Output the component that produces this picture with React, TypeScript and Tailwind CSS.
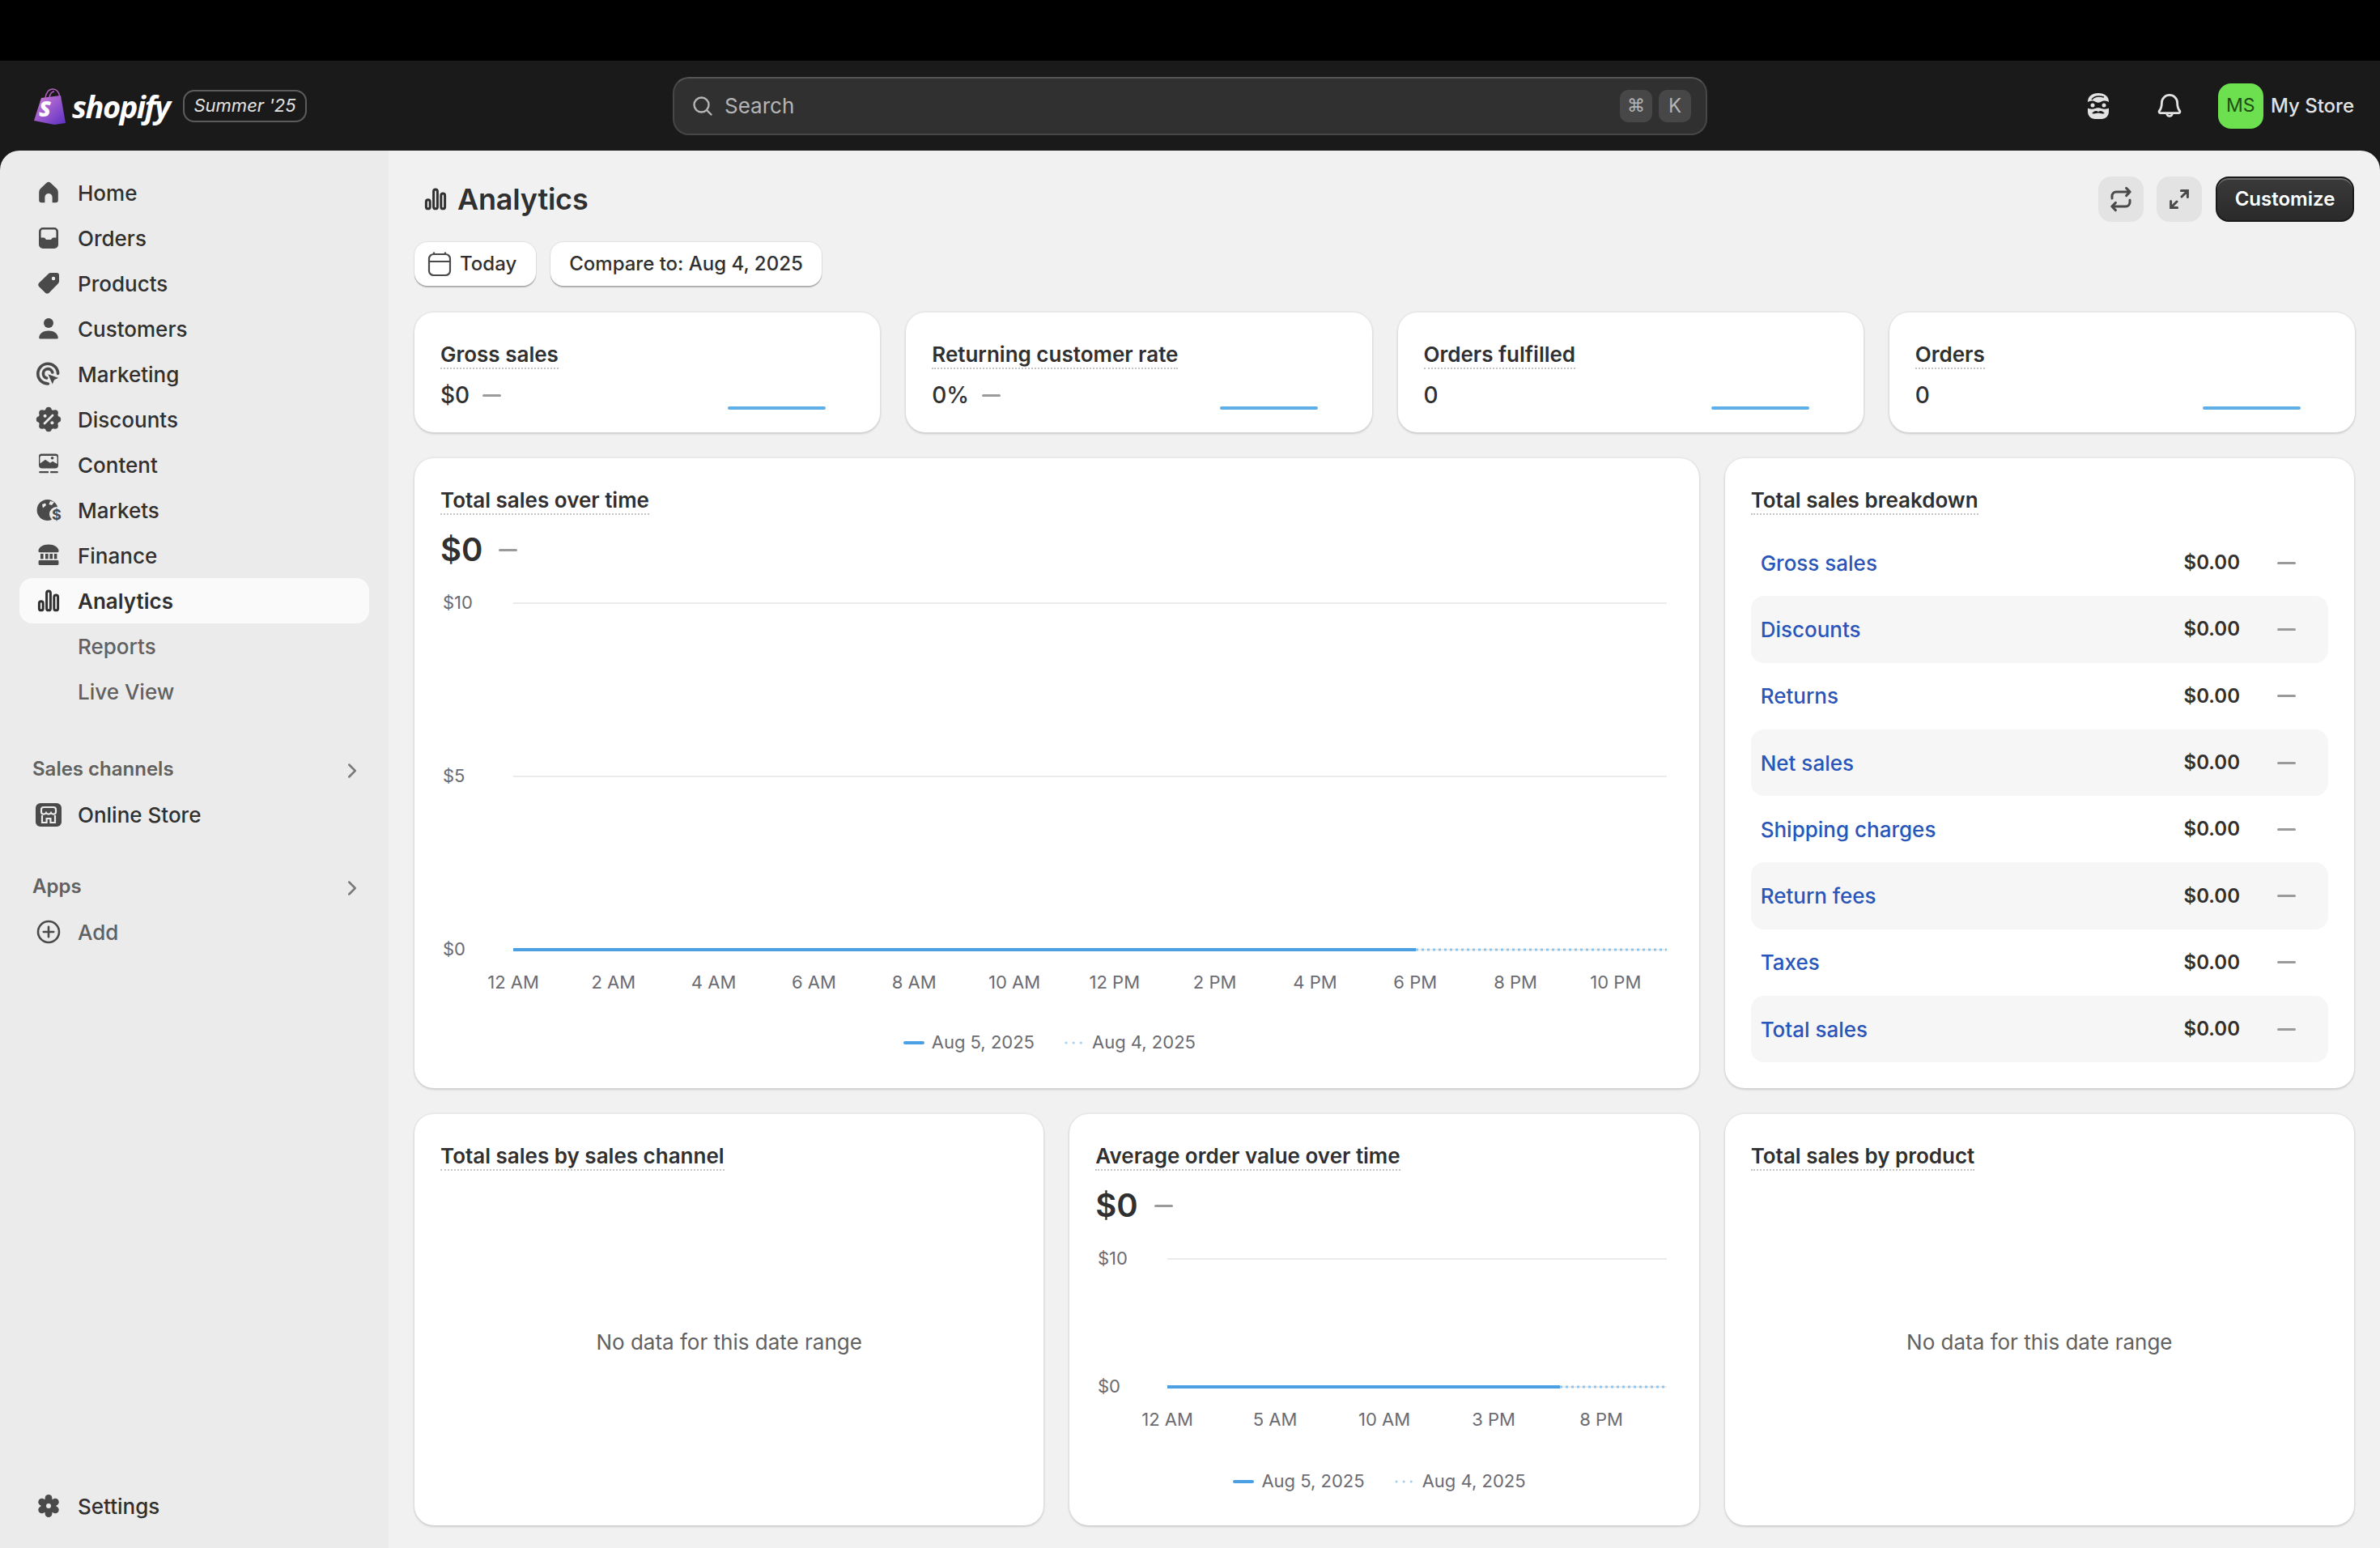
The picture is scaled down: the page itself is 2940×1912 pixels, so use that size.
const sans = 'font-["Inter",sans-serif]';
const inkIcon = '#4a4a4a';

// ── Nav icons (drawn on a 20 unit box, shown at 40px) ──
function Icon({ children, className = '' }: { children: React.ReactNode; className?: string }) {
  return (
    <svg viewBox="0 0 20 20" className={`w-10 h-10 shrink-0 ${className}`} fill={inkIcon}>
      {children}
    </svg>
  );
}

const HomeIcon = () => (
  <Icon>
    <path d="M8.800 3.900a1.800 1.800 0 0 1 2.400 0l3.700 3.500a3 3 0 0 1 1 2.200v5a1.500 1.500 0 0 1-1.500 1.500h-2.100v-3.300a2.300 2.300 0 0 0-4.600 0v3.300H5.600A1.500 1.500 0 0 1 4.100 14.600V9.600a3 3 0 0 1 1-2.200Z" />
  </Icon>
);
const OrdersIcon = () => (
  <Icon>
    <path fillRule="evenodd" d="M6.500 3.500h7A2.500 2.500 0 0 1 16 6v8a2.500 2.500 0 0 1-2.500 2.500h-7A2.500 2.500 0 0 1 4 14V6a2.500 2.500 0 0 1 2.500-2.500ZM6.500 4.800A1.200 1.200 0 0 0 5.300 6v3.700H7a1 1 0 0 1 .8.400l.7.900h3l.7-.900a1 1 0 0 1 .8-.400h1.700V6a1.200 1.200 0 0 0-1.200-1.200Z" />
  </Icon>
);
const ProductsIcon = () => (
  <Icon>
    <path fillRule="evenodd" d="M11.300 3.500H15a1.500 1.500 0 0 1 1.500 1.500v3.700a2 2 0 0 1-.6 1.400l-5.500 5.600a1.800 1.800 0 0 1-2.500 0L4.200 12.100a1.800 1.800 0 0 1 0-2.500l5.700-5.500a2 2 0 0 1 1.400-.6ZM13 5.900a1.100 1.100 0 1 0 0 2.200 1.100 1.100 0 0 0 0-2.200Z" />
  </Icon>
);
const CustomersIcon = () => (
  <Icon>
    <circle cx="10" cy="6.500" r="3" />
    <path d="M4.100 15.500c.2-2.600 2.700-4.300 5.900-4.300s5.700 1.700 5.900 4.300a.8.800 0 0 1-.8.800H4.900a.8.800 0 0 1-.8-.8Z" />
  </Icon>
);
const MarketingIcon = () => (
  <Icon>
    <g fill="none" stroke={inkIcon} strokeWidth="1.800" strokeLinecap="round">
      <path d="M9.700 16A6.200 6.200 0 1 1 15.800 9.700" />
      <path d="M8.800 12.500a2.900 2.900 0 1 1 3.600-3.500" />
    </g>
    <path d="M9.300 9.700l7.400 2.700-3 1.300-1.300 3.100Z" stroke="#ebebeb" strokeWidth=".5" />
  </Icon>
);
function DiscountsIcon() {
  const lobes = [0, 45, 90, 135, 180, 225, 270, 315];
  return (
    <Icon>
      <circle cx="10" cy="10" r="6.300" />
      {lobes.map((a) => (
        <circle key={a} cx={10 + 5.700 * Math.cos((a * Math.PI) / 180)} cy={10 + 5.700 * Math.sin((a * Math.PI) / 180)} r="1.900" />
      ))}
      <path d="M12.500 7.500 7.500 12.500" stroke="#ebebeb" strokeWidth="1.400" strokeLinecap="round" />
      <circle cx="7.800" cy="7.900" r="1" fill="#ebebeb" />
      <circle cx="12.200" cy="12.100" r="1" fill="#ebebeb" />
    </Icon>
  );
}
const ContentIcon = () => (
  <Icon>
    <path d="M5.600 3.200h8.800A1.600 1.600 0 0 1 16 4.800v5.400a2 2 0 0 1-2 2H6a2 2 0 0 1-2-2V4.800a1.600 1.600 0 0 1 1.600-1.600Z" />
    <path d="M4.700 9.300 8 6.900l3 2 1.500-1 2.800 1.600v-4a1 1 0 0 0-1-1H5.700a1 1 0 0 0-1 1Z" fill="#ebebeb" />
    <circle cx="12.300" cy="5.900" r=".9" />
    <rect x="4.100" y="14" width="6" height="1.100" rx=".5" />
    <rect x="11" y="14" width="4.900" height="1.100" rx=".5" />
  </Icon>
);
const MarketsIcon = () => (
  <Icon>
    <circle cx="9.300" cy="10" r="6.500" />
    <path d="M6 6.500 8 5.800 8.500 7 6.500 8.800Z" fill="#ebebeb" />
    <path d="M11 4.500 13.500 5 12 7 10.200 6.500Z" fill="#ebebeb" />
    <circle cx="15" cy="12.500" r="4.500" fill="#ebebeb" />
    <text x="15" y="15.800" textAnchor="middle" fontSize="9" fontWeight="700" fontFamily="Inter, sans-serif">$</text>
  </Icon>
);
const FinanceIcon = () => (
  <Icon>
    <path d="M10 3.300c3.500 0 6 1.700 6.300 3.800a.9.900 0 0 1-.9 1H4.600a.9.900 0 0 1-.9-1C4 5 6.500 3.300 10 3.300Z" />
    <rect x="5" y="9" width="1.800" height="3.200" />
    <rect x="8" y="9" width="1.800" height="3.200" />
    <rect x="10.700" y="9" width="1.800" height="3.200" />
    <rect x="13.400" y="9" width="1.800" height="3.200" />
    <rect x="3.800" y="13" width="12.400" height="3" rx=".7" />
  </Icon>
);
function AnalyticsIcon({ className = 'w-10 h-10' }: { className?: string }) {
  return (
    <svg viewBox="0 0 20 20" className={`shrink-0 ${className}`} fill="none" stroke="#303030" strokeWidth="1.500">
      <rect x="4.200" y="10.400" width="2.400" height="5.500" rx="1.200" />
      <rect x="8.800" y="4" width="2.400" height="11.900" rx="1.200" />
      <rect x="13.400" y="6.500" width="2.400" height="9.400" rx="1.200" />
    </svg>
  );
}
const StoreIcon = () => (
  <Icon>
    <rect x="2" y="3" width="16" height="14.500" rx="3" />
    <path d="M5.500 8.500V7a1.500 1.500 0 0 1 1.500-1.500h6A1.500 1.500 0 0 1 14.500 7v1.500c0 .8-.7 1.300-1.500 1.300-.6 0-1.200-.3-1.500-.8-.3.500-.9.800-1.500.800s-1.200-.3-1.500-.8c-.3.500-.9.800-1.500.800-.8 0-1.500-.5-1.500-1.300Z" fill="none" stroke="#ebebeb" strokeWidth="1.100" />
    <path d="M6 10.500v4.500h2.800v-2.500h2.400V15H14v-4.500" fill="none" stroke="#ebebeb" strokeWidth="1.100" />
  </Icon>
);
const AddIcon = () => (
  <Icon>
    <circle cx="10" cy="10" r="6.500" fill="none" stroke={inkIcon} strokeWidth="1.300" />
    <path d="M10 6.900v6.200M6.900 10h6.200" stroke={inkIcon} strokeWidth="1.300" strokeLinecap="round" />
  </Icon>
);
function SettingsIcon() {
  const lobes = [30, 90, 150, 210, 270, 330];
  return (
    <Icon>
      <circle cx="10" cy="10" r="4.800" />
      {lobes.map((a) => (
        <circle key={a} cx={10 + 4.800 * Math.cos((a * Math.PI) / 180)} cy={10 + 4.800 * Math.sin((a * Math.PI) / 180)} r="2.200" />
      ))}
      <circle cx="10" cy="10" r="1.500" fill="#ebebeb" />
    </Icon>
  );
}

function Chevron() {
  return (
    <svg viewBox="0 0 20 20" className="w-[30px] h-[30px] mt-[3px]" fill="none" stroke="#7a7a7a" strokeWidth="1.700" strokeLinecap="round" strokeLinejoin="round">
      <path d="m7.500 5 5 5-5 5" />
    </svg>
  );
}

function NavItem({ icon, label, active, muted }: { icon?: React.ReactNode; label: string; active?: boolean; muted?: boolean }) {
  return (
    <div className={`h-14 mx-6 pl-4 rounded-[16px] flex items-center gap-4 text-[26px] ${active ? 'bg-[#fafafa] font-semibold text-[#303030]' : muted ? 'font-medium text-[#616161]' : 'font-medium text-[#303030]'}`}>
      <span className="w-10 h-10 shrink-0 flex items-center justify-center">{icon}</span>
      {label}
    </div>
  );
}

function Sidebar() {
  return (
    <aside className="w-[480px] shrink-0 bg-[#ebebeb] pt-6 pb-6 flex flex-col">
      <NavItem icon={<HomeIcon />} label="Home" />
      <NavItem icon={<OrdersIcon />} label="Orders" />
      <NavItem icon={<ProductsIcon />} label="Products" />
      <NavItem icon={<CustomersIcon />} label="Customers" />
      <NavItem icon={<MarketingIcon />} label="Marketing" />
      <NavItem icon={<DiscountsIcon />} label="Discounts" />
      <NavItem icon={<ContentIcon />} label="Content" />
      <NavItem icon={<MarketsIcon />} label="Markets" />
      <NavItem icon={<FinanceIcon />} label="Finance" />
      <NavItem icon={<AnalyticsIcon />} label="Analytics" active />
      <NavItem label="Reports" muted />
      <NavItem label="Live View" muted />

      <div className="mt-[48px] h-10 mb-2 pl-10 pr-[30px] flex items-center justify-between text-[24px] font-semibold text-[#616161]">
        Sales channels
        <Chevron />
      </div>
      <NavItem icon={<StoreIcon />} label="Online Store" />

      <div className="mt-[41px] h-10 mb-2 pl-10 pr-[30px] flex items-center justify-between text-[24px] font-semibold text-[#616161]">
        Apps
        <Chevron />
      </div>
      <NavItem icon={<AddIcon />} label="Add" muted />

      <div className="mt-auto">
        <NavItem icon={<SettingsIcon />} label="Settings" />
      </div>
    </aside>
  );
}

// ── Top bar ──
function Logo() {
  return (
    <div className="flex items-center">
      <svg viewBox="0 0 41 46" className="w-[41px] h-[46px] ml-[41px]">
        <defs>
          <linearGradient id="bag" x1="0" y1="0" x2="1" y2="1">
            <stop offset="0" stopColor="#d581d6" />
            <stop offset="1" stopColor="#5c2fc4" />
          </linearGradient>
        </defs>
        <path d="M15 13c1-6 4-11 9-11 5 0 8 4 9 10M20 12c1-4 3-7 6-7" fill="none" stroke="#b860c8" strokeWidth="1.500" />
        <path d="M10 13 34 10l6 34-14 2L1 41Z" fill="url(#bag)" />
        <text x="14.500" y="36" textAnchor="middle" fill="#fff" fontSize="27" fontWeight="800" fontStyle="italic" fontFamily="'Open Sans', sans-serif">S</text>
      </svg>
      <span className="ml-[7px] text-[38px] leading-none font-['Open_Sans',sans-serif] font-bold italic tracking-[-1.500px] text-white">shopify</span>
      <span className="ml-[17px] h-10 px-[11px] flex items-center rounded-[14px] border-2 border-[#5c5c5c] text-[22px] italic text-[#e3e3e3]">Summer '25</span>
    </div>
  );
}

function Search() {
  return (
    <div className="h-[72px] rounded-[20px] bg-[#303030] border-2 border-[#474747] border-t-[#555555] flex items-center pl-[20px] pr-[18px]">
      <svg viewBox="0 0 20 20" className="w-[30px] h-[30px]" fill="none" stroke="#b5b5b5" strokeWidth="1.600" strokeLinecap="round">
        <circle cx="9" cy="9" r="6" />
        <path d="m13.500 13.500 3.500 3.500" />
      </svg>
      <span className="ml-[12px] text-[26px] text-[#b5b5b5]">Search</span>
      <span className="ml-auto w-10 h-10 rounded-[10px] bg-[#474747] flex items-center justify-center text-[22px] text-[#b5b5b5] font-['DejaVu_Sans',sans-serif]">⌘</span>
      <span className="ml-2 w-10 h-10 rounded-[10px] bg-[#474747] flex items-center justify-center text-[24px] text-[#b5b5b5]">K</span>
    </div>
  );
}

function Mascot() {
  return (
    <svg viewBox="0 0 32 34" className="w-[32px] h-[34px]">
      <path d="M3 12C3 5 8 1 16 1s13 4 13 11v12c0 5-4 9-9 9h-8c-5 0-9-4-9-9Z" fill="#e3e3e3" />
      <path d="M2 13c4-3 7-3 11-1 2 1 4 1 6 0 4-2 7-2 11 1v6c-3 2-7 2-10 1-2-1-6-1-8 0-3 1-7 1-10-1Z" fill="#1a1a1a" />
      <path d="M8 9c3-4 8-5 15-3" fill="none" stroke="#1a1a1a" strokeWidth="1.600" />
      <circle cx="9" cy="16" r="2.500" fill="#e3e3e3" />
      <circle cx="23" cy="16" r="2.500" fill="#e3e3e3" />
      <path d="M8 26c3-3 5-4 8-2 3-2 5-1 8 2-3 1-5 0-8-.5-3 .5-5 1.500-8 .5Z" fill="#1a1a1a" />
    </svg>
  );
}

function Bell() {
  return (
    <svg viewBox="0 0 20 20" className="w-10 h-10" fill="none" stroke="#e3e3e3" strokeWidth="1.400" strokeLinejoin="round">
      <path d="M10 3.200a4.800 4.800 0 0 0-4.800 4.800c0 2.800-.6 3.900-1.500 5a.8.800 0 0 0 .6 1.300h11.400a.8.800 0 0 0 .6-1.300c-.9-1.100-1.500-2.200-1.500-5A4.800 4.800 0 0 0 10 3.200Z" />
      <path d="M8.300 14.500a1.700 1.700 0 0 0 3.400 0" />
    </svg>
  );
}

function TopBar() {
  return (
    <header className="h-[111px] shrink-0 bg-[#1a1a1a] grid grid-cols-[1fr_1278px_1fr] items-center">
      <Logo />
      <Search />
      <div className="flex items-center justify-end pr-8">
        <span className="w-10 h-10 flex items-center justify-center"><Mascot /></span>
        <span className="ml-12"><Bell /></span>
        <span className="ml-10 w-14 h-14 rounded-[16px] bg-[#6de04f] flex items-center justify-center text-[23px] text-[#1e4d14]">MS</span>
        <span className="ml-[9px] text-[24px] font-medium text-[#e3e3e3]">My Store</span>
      </div>
    </header>
  );
}

// ── Analytics pieces ──
function Title({ children }: { children: React.ReactNode }) {
  return (
    <span className="inline-block h-[34px] leading-[32px] text-[26px] font-semibold text-[#303030] border-b-2 border-dotted border-[#c4c4c4]">
      {children}
    </span>
  );
}

function Dash({ className = '' }: { className?: string }) {
  return <span className={`block w-[23px] h-[3px] rounded-full bg-[#9a9a9a] ${className}`} />;
}

function Card({ children, className = '' }: { children: React.ReactNode; className?: string }) {
  return (
    <section className={`bg-white rounded-[24px] shadow-[0_2px_3px_rgba(0,0,0,0.12),0_0_0_2px_rgba(0,0,0,0.03)] ${className}`}>
      {children}
    </section>
  );
}

function MetricCard({ title, value, dash = true }: { title: string; value: string; dash?: boolean }) {
  return (
    <Card className="h-[148px] pl-8 pr-[67px] pt-9 flex justify-between">
      <div>
        <Title>{title}</Title>
        <div className="mt-[14px] h-9 flex items-center gap-4 text-[28px] font-medium text-[#303030]">
          {value}
          {dash && <Dash />}
        </div>
      </div>
      <span className="block self-start mt-[80px] w-[121px] h-1 rounded-full bg-[#5eafe8]" />
    </Card>
  );
}

const axisClass = 'fill-[#6b6b72] text-[22px] font-["Inter",sans-serif]';

function LineChart({
  width, height, left, right, split, yTicks, xTicks,
}: {
  width: number; height: number; left: number; right: number; split: number;
  yTicks: { label: string; y: number }[]; xTicks: { label: string; x: number }[];
}) {
  const baseY = yTicks[yTicks.length - 1].y;
  return (
    <svg width={width} height={height} className="block">
      {yTicks.map((t) => (
        <g key={t.label}>
          <text x={3} y={t.y + 7} className={axisClass}>{t.label}</text>
          <line x1={left} x2={right} y1={t.y} y2={t.y} stroke="#ebebeb" strokeWidth="2" />
        </g>
      ))}
      <line x1={left} x2={split} y1={baseY} y2={baseY} stroke="#4b9fe3" strokeWidth="4" />
      <line x1={split} x2={right} y1={baseY} y2={baseY} stroke="#8fc4ec" strokeWidth="3" strokeDasharray="3 4" />
      {xTicks.map((t) => (
        <text key={t.label} x={t.x} y={baseY + 48} textAnchor="middle" className={axisClass}>{t.label}</text>
      ))}
    </svg>
  );
}

function Legend({ className = '' }: { className?: string }) {
  return (
    <div className={`flex items-center justify-center gap-[36px] text-[22px] text-[#6b6b72] ${className}`}>
      <span className="flex items-center gap-[9px]">
        <span className="block w-[26px] h-1 rounded-full bg-[#4ba0e3]" />
        Aug 5, 2025
      </span>
      <span className="flex items-center gap-[9px]">
        <svg width="26" height="4"><line x1="3" x2="25" y1="2" y2="2" stroke="#a5cfee" strokeWidth="3" strokeDasharray="0.1 9" strokeLinecap="round" /></svg>
        Aug 4, 2025
      </span>
    </div>
  );
}

const breakdown = ['Gross sales', 'Discounts', 'Returns', 'Net sales', 'Shipping charges', 'Return fees', 'Taxes', 'Total sales'];

const hourTicks = ['12 AM', '2 AM', '4 AM', '6 AM', '8 AM', '10 AM', '12 PM', '2 PM', '4 PM', '6 PM', '8 PM', '10 PM'].map((label, i) => ({
  label,
  x: 90 + i * 123.800,
}));

function Analytics() {
  return (
    <main className="flex-1 min-w-0 bg-[#f1f1f1] px-8 pt-8 overflow-hidden">
      <div className="flex items-center h-14">
        <AnalyticsIcon className="w-10 h-10 ml-[6px]" />
        <h1 className="ml-[7px] text-[36px] font-semibold text-[#303030] tracking-[-0.2px]">Analytics</h1>
        <div className="ml-auto flex items-center">
          <button className="w-14 h-14 rounded-[16px] bg-[#e3e3e3] flex items-center justify-center">
            <svg viewBox="0 0 20 20" className="w-10 h-10" fill="none" stroke="#4a4a4a" strokeWidth="1.500" strokeLinecap="round" strokeLinejoin="round">
              <path d="M4.500 9.500V8A2.500 2.500 0 0 1 7 5.500h8.500M13.300 3.200l2.300 2.300-2.300 2.300" />
              <path d="M15.500 10.500V12a2.500 2.500 0 0 1-2.500 2.500H4.500M6.700 12.200 4.400 14.500l2.300 2.300" />
            </svg>
          </button>
          <button className="ml-4 w-14 h-14 rounded-[16px] bg-[#e3e3e3] flex items-center justify-center">
            <svg viewBox="0 0 20 20" className="w-10 h-10" fill="none" stroke="#4a4a4a" strokeWidth="1.500" strokeLinecap="round">
              <path d="M5 15 8.500 11.500M11.500 8.500 15 5M11.200 4.800H15.200V8.800M4.800 11.200V15.200H8.800" />
            </svg>
          </button>
          <button className="ml-[17px] w-[171px] h-14 rounded-[16px] bg-gradient-to-b from-[#3a3a3a] to-[#2a2a2a] border-2 border-[#1a1a1a] shadow-[inset_0_2px_0_rgba(255,255,255,0.25)] text-[24px] font-semibold text-white">
            Customize
          </button>
        </div>
      </div>

      <div className="mt-[25px] flex items-center gap-[18px]">
        <button className="h-[54px] w-[150px] rounded-[16px] bg-white shadow-[0_2px_1px_rgba(0,0,0,0.25),0_0_0_1px_rgba(0,0,0,0.06)] flex items-center pl-[11px] gap-[5px] text-[24px] font-medium text-[#303030]">
          <svg viewBox="0 0 20 20" className="w-10 h-10" fill="none" stroke="#4a4a4a" strokeWidth="1.100">
            <rect x="3.500" y="4" width="13" height="13" rx="2.800" />
            <path d="M3.500 8.500h13M6.500 2.800V4M13.500 2.800V4" />
          </svg>
          Today
        </button>
        <button className="h-[54px] w-[335px] rounded-[16px] bg-white shadow-[0_2px_1px_rgba(0,0,0,0.25),0_0_0_1px_rgba(0,0,0,0.06)] text-[24px] font-medium text-[#303030]">
          Compare to: Aug 4, 2025
        </button>
      </div>

      <div className="mt-[33px] -mr-[1px] grid grid-cols-4 gap-8">
        <MetricCard title="Gross sales" value="$0" />
        <MetricCard title="Returning customer rate" value="0%" />
        <MetricCard title="Orders fulfilled" value="0" dash={false} />
        <MetricCard title="Orders" value="0" dash={false} />
      </div>

      <div className="mt-8 grid grid-cols-3 gap-8">
        <Card className="col-span-2 h-[778px] pl-8 pt-9">
          <Title>Total sales over time</Title>
          <div className="mt-[19px] h-12 flex items-center gap-[20px] text-[40px] font-semibold text-[#303030]">
            $0
            <Dash />
          </div>
          <div className="mt-[18px]">
            <LineChart
              width={1522}
              height={540}
              left={90}
              right={1515}
              split={1205}
              yTicks={[
                { label: '$10', y: 24 },
                { label: '$5', y: 238 },
                { label: '$0', y: 452 },
              ]}
              xTicks={hourTicks}
            />
          </div>
          <div className="mt-[10px]">
            <Legend className="pr-[50px]" />
          </div>
        </Card>

        <Card className="h-[778px] px-8 pt-9">
          <Title>Total sales breakdown</Title>
          <div className="mt-[18px]">
            {breakdown.map((name, i) => (
              <div key={name} className={`h-[82.300px] rounded-[16px] pl-3 pr-[40px] flex items-center text-[26px] ${i % 2 === 1 ? 'bg-[#f6f6f6]' : ''}`}>
                <span className="flex-1 font-medium text-[#2a55b9]">{name}</span>
                <span className="text-[24px] font-semibold text-[#303030]">$0.00</span>
                <Dash className="ml-[46px]" />
              </div>
            ))}
          </div>
        </Card>

        <Card className="h-[508px] px-8 pt-9 flex flex-col">
          <div><Title>Total sales by sales channel</Title></div>
          <div className="flex-1 flex items-center justify-center pb-[16px] text-[26px] text-[#616161]">No data for this date range</div>
        </Card>

        <Card className="h-[508px] pl-8 pt-9">
          <Title>Average order value over time</Title>
          <div className="mt-[19px] h-12 flex items-center gap-[20px] text-[40px] font-semibold text-[#303030]">
            $0
            <Dash />
          </div>
          <div className="mt-[18px]">
            <LineChart
              width={712}
              height={250}
              left={89}
              right={706}
              split={574}
              yTicks={[
                { label: '$10', y: 24 },
                { label: '$0', y: 182 },
              ]}
              xTicks={[
                { label: '12 AM', x: 89 },
                { label: '5 AM', x: 222 },
                { label: '10 AM', x: 357 },
                { label: '3 PM', x: 492 },
                { label: '8 PM', x: 625 },
              ]}
            />
          </div>
          <div className="mt-[32px]">
            <Legend className="pr-[44px]" />
          </div>
        </Card>

        <Card className="h-[508px] px-8 pt-9 flex flex-col">
          <div><Title>Total sales by product</Title></div>
          <div className="flex-1 flex items-center justify-center pb-[16px] text-[26px] text-[#616161]">No data for this date range</div>
        </Card>
      </div>
    </main>
  );
}

export default function App() {
  return (
    <div className={`h-screen w-full overflow-hidden bg-[#1a1a1a] flex flex-col ${sans}`}>
      <div className="h-[75px] shrink-0 bg-black" />
      <TopBar />
      <div className="flex-1 min-h-0 flex rounded-t-[24px] overflow-hidden">
        <Sidebar />
        <Analytics />
      </div>
    </div>
  );
}
